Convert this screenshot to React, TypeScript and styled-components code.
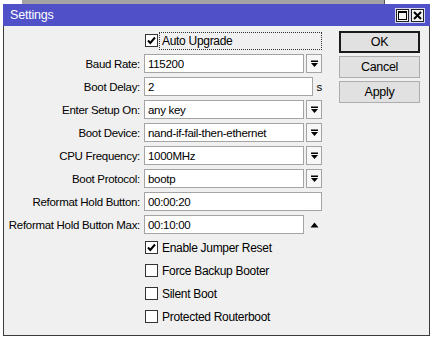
import styled, { createGlobalStyle } from "styled-components";

const GlobalStyle = createGlobalStyle`
  html, body {
    margin: 0;
    padding: 0;
    background: #ffffff;
  }
  body {
    font-family: "Liberation Sans", Arial, sans-serif;
    font-size: 11.5px;
    letter-spacing: -0.3px;
    color: #000;
  }
`;

const Desktop = styled.div`
  width: 433px;
  height: 337px;
  background: #ffffff;
  overflow: hidden;
`;

const BackStrip = styled.div`
  display: flex;
  height: 4px;
`;

const BackPiece = styled.div<{ w?: number; tone?: string }>`
  width: ${(p) => (p.w ? `${p.w}px` : "auto")};
  flex: ${(p) => (p.w ? "none" : 1)};
  background: ${(p) => p.tone || "#fff"};
  border-right: ${(p) => (p.tone ? "1px solid #555" : "none")};
`;

const Window = styled.div`
  margin-left: 3px;
  width: 427px;
  height: 332px;
  box-sizing: border-box;
  border: 1px solid #3c3c3c;
  border-top: none;
  background: #f0f0f0;
  display: flex;
  flex-direction: column;
`;

const TitleBar = styled.div`
  height: 22px;
  margin: 0 -1px;
  background: #5051c9;
  color: #ffffff;
  display: flex;
  align-items: center;
  justify-content: space-between;
  padding: 0 6px 0 7px;
  font-size: 12.5px;
  letter-spacing: -0.2px;
`;

const TitleButtons = styled.div`
  display: flex;
  gap: 2px;
`;

const TitleButton = styled.div`
  width: 13px;
  height: 13px;
  box-sizing: border-box;
  background: #f4f4f4;
  border: 1px solid #222;
  outline: 1px solid #d8d8f0;
  display: flex;
  align-items: center;
  justify-content: center;
`;

const Body = styled.div`
  display: flex;
  padding-top: 5px;
`;

const Form = styled.div`
  display: flex;
  flex-direction: column;
  gap: 4px;
  width: 318px;
`;

const Row = styled.div`
  display: grid;
  grid-template-columns: 136px 178px;
  column-gap: 4px;
  height: 19px;
  align-items: center;
`;

const Label = styled.div`
  text-align: right;
  white-space: nowrap;
`;

const FieldLine = styled.div`
  display: flex;
  align-items: center;
  height: 19px;
  gap: 2px;
`;

const Input = styled.div<{ w: number }>`
  width: ${(p) => p.w}px;
  height: 19px;
  box-sizing: border-box;
  background: #ffffff;
  border: 1px solid #a4a4a4;
  padding: 0 3px;
  display: flex;
  align-items: center;
  white-space: nowrap;
  overflow: hidden;
`;

const DropButton = styled.div`
  width: 16px;
  height: 19px;
  box-sizing: border-box;
  background: #f7f7f7;
  border: 1px solid #a4a4a4;
  display: flex;
  align-items: center;
  justify-content: center;
`;

const Unit = styled.span`
  margin-left: 2px;
`;

const Arrow = styled.div`
  width: 16px;
  display: flex;
  align-items: center;
  justify-content: center;
`;

const CheckLine = styled.div`
  display: flex;
  align-items: center;
  height: 19px;
  padding-left: 1px;
`;

const Box = styled.div`
  width: 13px;
  height: 13px;
  box-sizing: border-box;
  background: #ffffff;
  border: 1px solid #333;
  display: flex;
  align-items: center;
  justify-content: center;
  flex: none;
`;

const CheckText = styled.div<{ focused?: boolean }>`
  margin-left: 1px;
  padding: 0 2px;
  height: 18px;
  display: flex;
  align-items: center;
  box-sizing: border-box;
  border: 1px dotted ${(p) => (p.focused ? "#333" : "transparent")};
  width: ${(p) => (p.focused ? "166px" : "auto")};
  font-size: 12px;
`;

const Buttons = styled.div`
  margin-left: 17px;
  display: flex;
  flex-direction: column;
  gap: 3px;
`;

const Button = styled.div<{ primary?: boolean }>`
  width: 81px;
  height: 22px;
  box-sizing: border-box;
  background: #e1e1e1;
  border: ${(p) => (p.primary ? "2px solid #1a1a1a" : "1px solid #adadad")};
  display: flex;
  align-items: center;
  justify-content: center;
  font-size: 12.5px;
`;

const DropIcon = () => (
  <svg width="7" height="8" viewBox="0 0 7 8">
    <rect x="0" y="0.5" width="7" height="1.5" fill="#000" />
    <polygon points="0,3 7,3 3.5,7" fill="#000" />
  </svg>
);

const UpIcon = () => (
  <svg width="9" height="6" viewBox="0 0 9 6">
    <polygon points="0.5,5.5 8.5,5.5 4.5,0.5" fill="#000" />
  </svg>
);

const Tick = () => (
  <svg width="11" height="11" viewBox="0 0 11 11">
    <polyline
      points="2,5.5 4.3,8 9,2.5"
      fill="none"
      stroke="#000"
      strokeWidth="2"
    />
  </svg>
);

const Check = ({
  label,
  checked,
  focused,
}: {
  label: string;
  checked?: boolean;
  focused?: boolean;
}) => (
  <Row>
    <span />
    <CheckLine>
      <Box>{checked && <Tick />}</Box>
      <CheckText focused={focused}>{label}</CheckText>
    </CheckLine>
  </Row>
);

const Select = ({ label, value }: { label: string; value: string }) => (
  <Row>
    <Label>{label}:</Label>
    <FieldLine>
      <Input w={160}>{value}</Input>
      <DropButton>
        <DropIcon />
      </DropButton>
    </FieldLine>
  </Row>
);

export default function App() {
  return (
    <>
      <GlobalStyle />
      <Desktop>
        <BackStrip>
          <BackPiece w={22} />
          <BackPiece tone="#a3a3a3" />
          <BackPiece w={48} />
        </BackStrip>
        <Window>
          <TitleBar>
            <span>Settings</span>
            <TitleButtons>
              <TitleButton>
                <svg width="9" height="9" viewBox="0 0 9 9">
                  <rect x="0.5" y="0.5" width="8" height="8" fill="none" stroke="#000" />
                  <rect x="0.5" y="0.5" width="8" height="1.5" fill="#000" />
                </svg>
              </TitleButton>
              <TitleButton>
                <svg width="9" height="9" viewBox="0 0 9 9">
                  <path d="M1 1 L8 8 M8 1 L1 8" stroke="#000" strokeWidth="2" />
                </svg>
              </TitleButton>
            </TitleButtons>
          </TitleBar>
          <Body>
            <Form>
              <Check label="Auto Upgrade" checked focused />
              <Select label="Baud Rate" value="115200" />
              <Row>
                <Label>Boot Delay:</Label>
                <FieldLine>
                  <Input w={169}>2</Input>
                  <Unit>s</Unit>
                </FieldLine>
              </Row>
              <Select label="Enter Setup On" value="any key" />
              <Select label="Boot Device" value="nand-if-fail-then-ethernet" />
              <Select label="CPU Frequency" value="1000MHz" />
              <Select label="Boot Protocol" value="bootp" />
              <Row>
                <Label>Reformat Hold Button:</Label>
                <FieldLine>
                  <Input w={178}>00:00:20</Input>
                </FieldLine>
              </Row>
              <Row>
                <Label>Reformat Hold Button Max:</Label>
                <FieldLine>
                  <Input w={160}>00:10:00</Input>
                  <Arrow>
                    <UpIcon />
                  </Arrow>
                </FieldLine>
              </Row>
              <Check label="Enable Jumper Reset" checked />
              <Check label="Force Backup Booter" />
              <Check label="Silent Boot" />
              <Check label="Protected Routerboot" />
            </Form>
            <Buttons>
              <Button primary>OK</Button>
              <Button>Cancel</Button>
              <Button>Apply</Button>
            </Buttons>
          </Body>
        </Window>
      </Desktop>
    </>
  );
}
